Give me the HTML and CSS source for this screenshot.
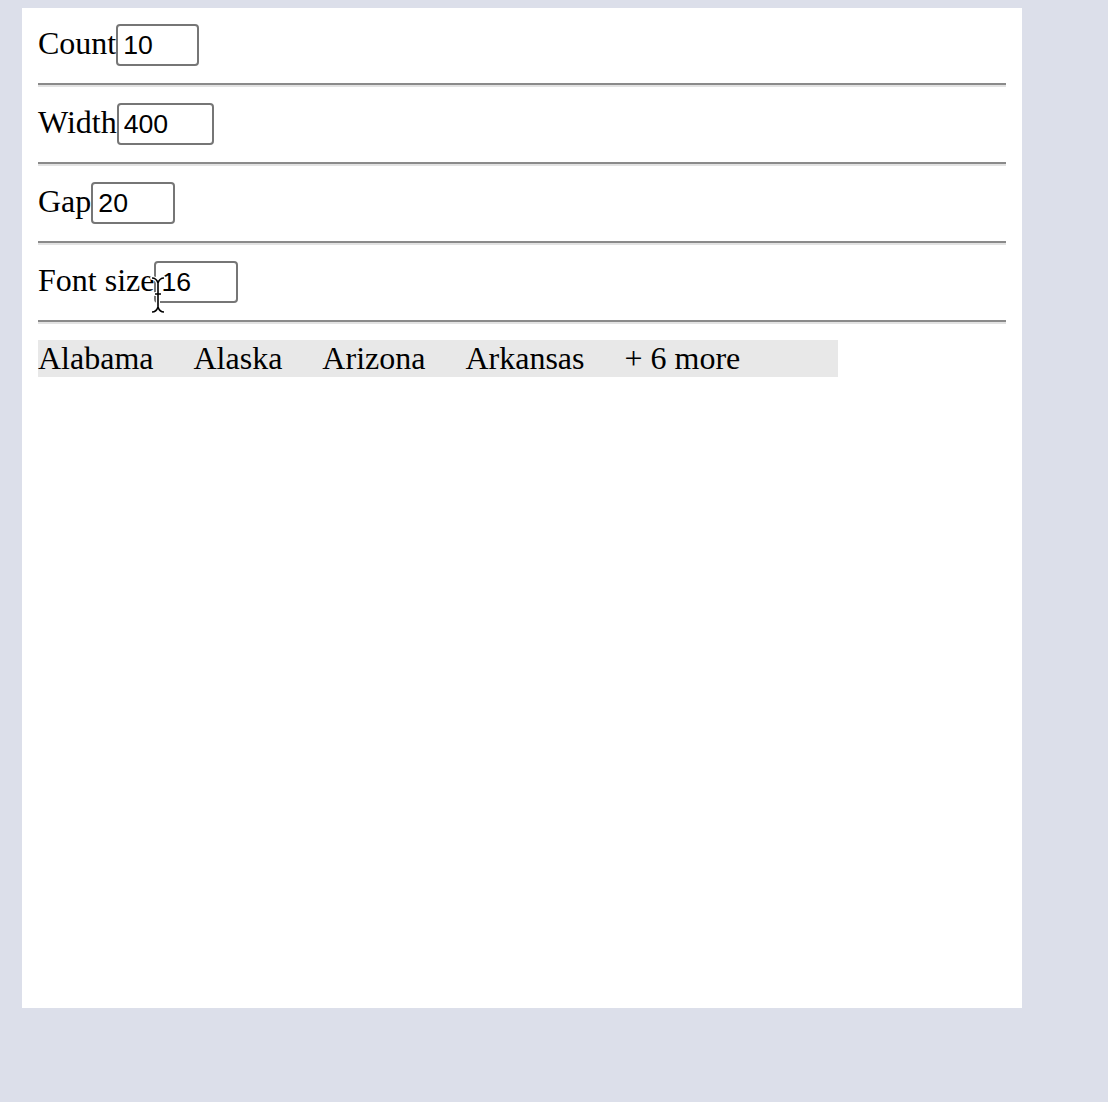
FILE: index.html
```html
<!DOCTYPE html>
<html>
<head>
<meta charset="utf-8">
<link rel="stylesheet" href="styles.css">
</head>
<body>
<div class="panel">
  <div class="row"><label class="lbl">Count</label><input class="num w-count" type="text" value="10"></div>
  <hr class="sep">
  <div class="row"><label class="lbl">Width</label><input class="num w-width" type="text" value="400"></div>
  <hr class="sep">
  <div class="row"><label class="lbl">Gap</label><input class="num w-gap" type="text" value="20"></div>
  <hr class="sep">
  <div class="row"><label class="lbl">Font size</label><input class="num w-font" type="text" value="16"></div>
  <hr class="sep">
  <div class="list">
    <span>Alabama</span><span>Alaska</span><span>Arizona</span><span>Arkansas</span><span>+ 6 more</span>
  </div>
</div>
<svg class="cursor" width="16" height="38" viewBox="0 0 16 38">
  <path d="M2 2 C5 2 7 4 8 7 C9 4 11 2 14 2 M8 7 L8 31 C7 34 5 36 2 36 M8 31 C9 34 11 36 14 36 M5 18 L11 18" fill="none" stroke="#fff" stroke-width="4" stroke-linecap="round"/>
  <path d="M2 2 C5 2 7 4 8 7 C9 4 11 2 14 2 M8 7 L8 31 C7 34 5 36 2 36 M8 31 C9 34 11 36 14 36 M5 18 L11 18" fill="none" stroke="#000" stroke-width="1.6"/>
</svg>
</body>
</html>
```
FILE: styles.css
```css
html, body {
  margin: 0;
  padding: 0;
  background: #dcdfea;
}
.panel {
  margin: 8px 0 0 22px;
  width: 1000px;
  height: 1000px;
  box-sizing: border-box;
  padding: 16px;
  background: #ffffff;
  font-family: "Liberation Serif", "Times New Roman", serif;
  font-size: 32px;
  color: #000;
}
.row {
  display: flex;
  align-items: baseline;
  line-height: 37px;
  height: 43px;
}
.lbl {
  white-space: nowrap;
}
.num {
  box-sizing: border-box;
  height: 42px;
  margin: 0;
  padding: 2px 5px;
  border: 2px solid #767676;
  border-radius: 4px;
  font-family: "Liberation Sans", Arial, sans-serif;
  font-size: 26.67px;
  color: #000;
  background: #fff;
  outline: none;
}
.w-count { width: 83px; }
.w-width { width: 97px; }
.w-gap { width: 84px; }
.w-font { width: 84px; }
.sep {
  margin: 16px 0;
  height: 0;
  border: 0;
  border-top: 2px solid #8a8a8a;
  border-bottom: 2px solid #e2e2e2;
}
.list {
  display: flex;
  gap: 40px;
  width: 800px;
  background: #e8e8e8;
  line-height: 37px;
  white-space: nowrap;
}
.cursor {
  position: absolute;
  left: 150px;
  top: 276px;
}
```
